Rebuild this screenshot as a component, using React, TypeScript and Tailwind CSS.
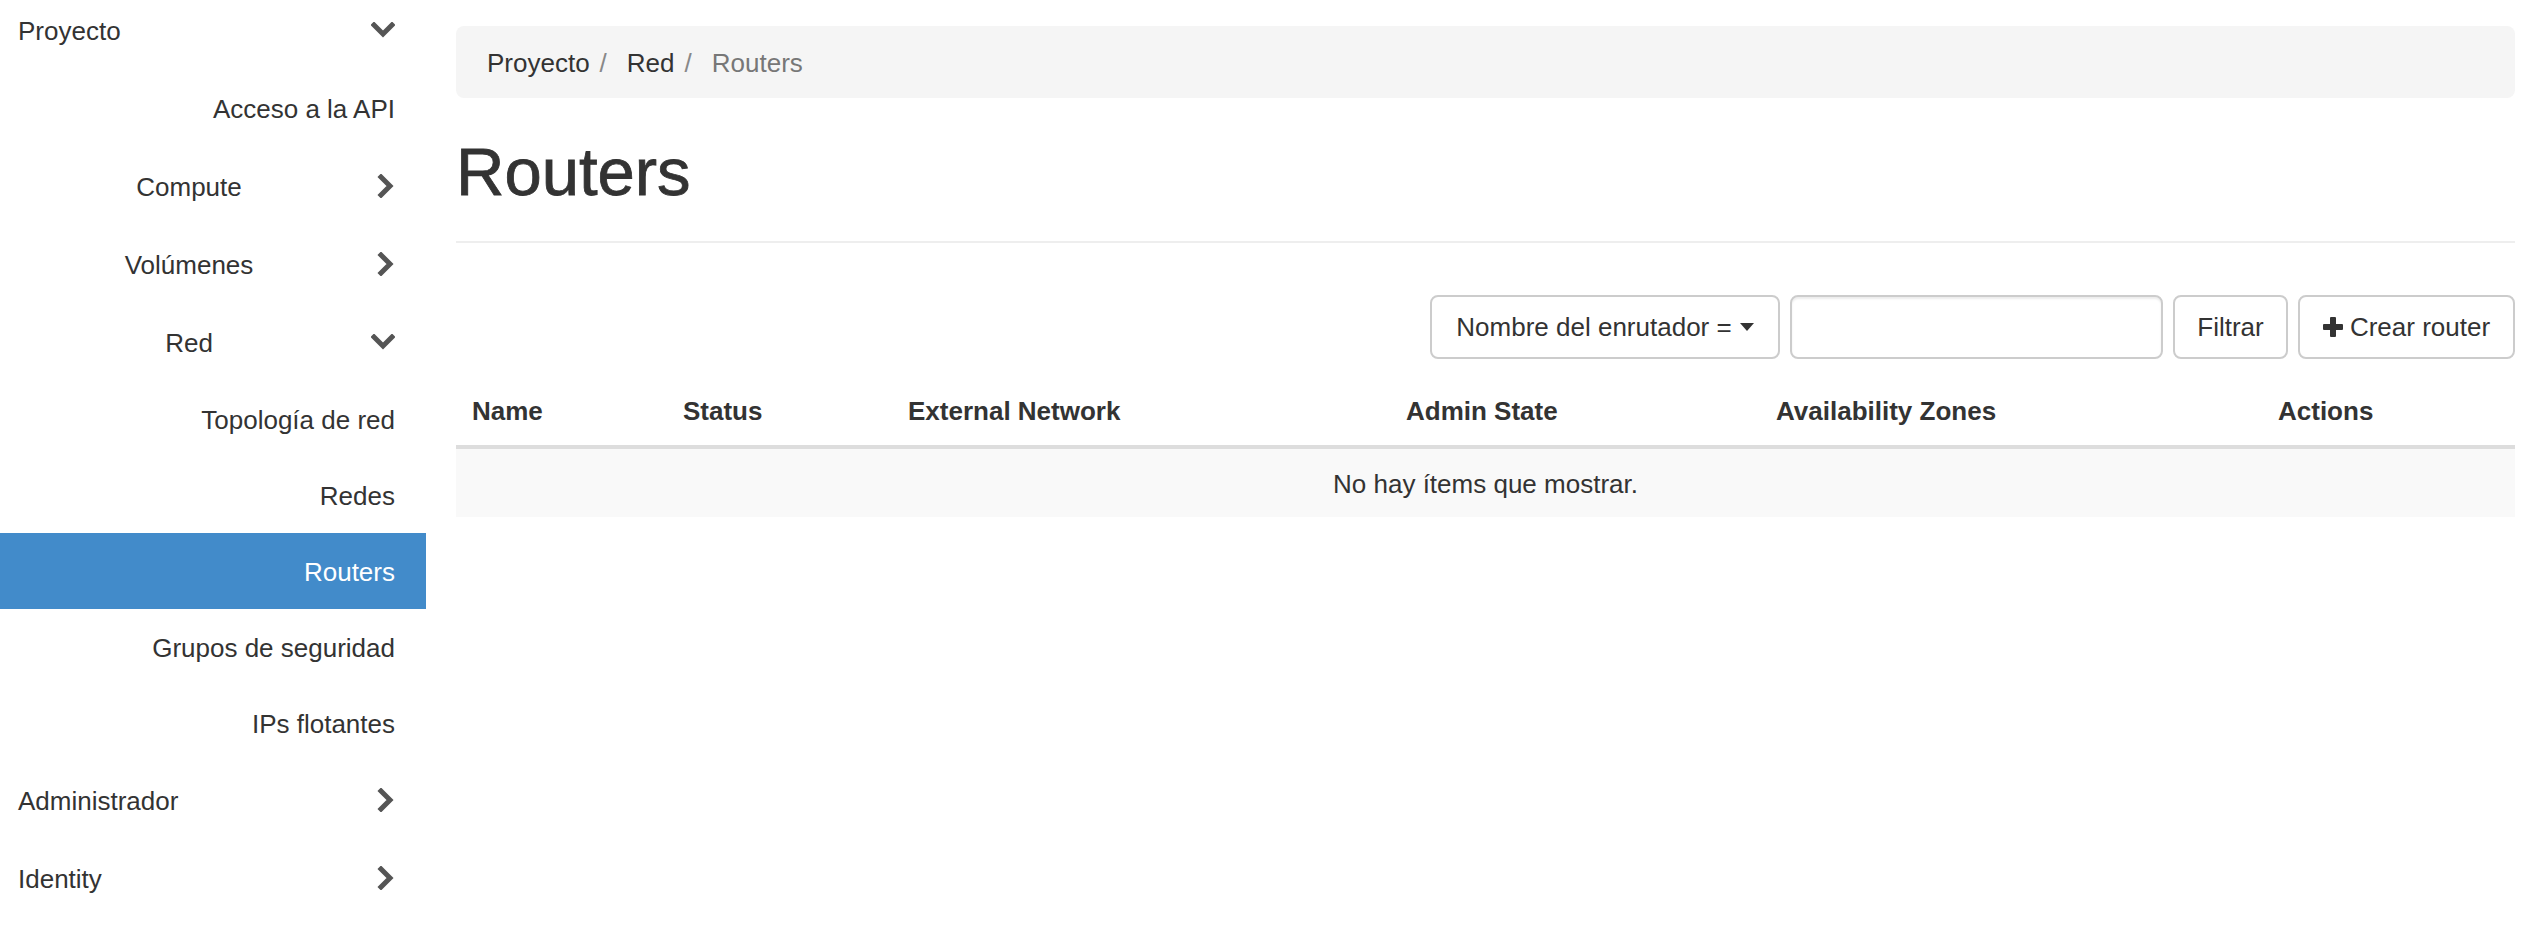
import { Fragment } from "react";

type NavItem = {
  label: string;
  level: 0 | 1 | 2;
  chevron?: "down" | "right";
  tall?: boolean;
  active?: boolean;
};

const navItems: NavItem[] = [
  { label: "Proyecto", level: 0, chevron: "down", tall: true },
  { label: "Acceso a la API", level: 2, tall: true },
  { label: "Compute", level: 1, chevron: "right", tall: true },
  { label: "Volúmenes", level: 1, chevron: "right", tall: true },
  { label: "Red", level: 1, chevron: "down", tall: true },
  { label: "Topología de red", level: 2 },
  { label: "Redes", level: 2 },
  { label: "Routers", level: 2, active: true },
  { label: "Grupos de seguridad", level: 2 },
  { label: "IPs flotantes", level: 2 },
  { label: "Administrador", level: 0, chevron: "right", tall: true },
  { label: "Identity", level: 0, chevron: "right", tall: true },
];

const columns = [
  { title: "Name", width: "w-[211px]" },
  { title: "Status", width: "w-[225px]" },
  { title: "External Network", width: "w-[498px]" },
  { title: "Admin State", width: "w-[370px]" },
  { title: "Availability Zones", width: "w-[502px]" },
  { title: "Actions", width: "w-[253px]" },
];

function Chevron({ dir }: { dir: "down" | "right" }) {
  if (dir === "down") {
    return (
      <svg width="24" height="16" viewBox="0 0 24 16" className="text-[#555]">
        <polyline
          points="3,3 12,12 21,3"
          fill="none"
          stroke="currentColor"
          strokeWidth="5"
          strokeLinecap="square"
        />
      </svg>
    );
  }
  return (
    <svg width="18" height="24" viewBox="0 0 18 24" className="text-[#555]">
      <polyline
        points="4,3 13,12 4,21"
        fill="none"
        stroke="currentColor"
        strokeWidth="5"
        strokeLinecap="square"
      />
    </svg>
  );
}

function Sidebar() {
  return (
    <aside className="w-[426px] shrink-0">
      <ul className="-mt-[9px]">
        {navItems.map((item) => (
          <li
            key={item.label}
            className={`flex items-center pl-[18px] pr-[31px] text-[26px] ${
              item.tall ? "h-[78px]" : "h-[76px]"
            } ${item.active ? "bg-[#428bca] text-white" : "text-[#333]"}`}
          >
            {item.level === 0 && (
              <Fragment>
                <span className="flex-1 pt-[2px]">{item.label}</span>
                <span className="flex w-[35px] justify-end">
                  {item.chevron && <Chevron dir={item.chevron} />}
                </span>
              </Fragment>
            )}
            {item.level === 1 && (
              <Fragment>
                <span className="flex-1 pt-[2px] text-center">{item.label}</span>
                <span className="flex w-[35px] justify-end">
                  {item.chevron && <Chevron dir={item.chevron} />}
                </span>
              </Fragment>
            )}
            {item.level === 2 && (
              <span className="flex-1 pt-[2px] text-right">{item.label}</span>
            )}
          </li>
        ))}
      </ul>
    </aside>
  );
}

function Toolbar() {
  return (
    <div className="mt-[52px] flex justify-end gap-[10px] text-[26px] text-[#333]">
      <button className="flex h-[64px] w-[350px] items-center justify-center gap-[8px] rounded-[8px] border-2 border-[#ccc] bg-white">
        <span>Nombre del enrutador =</span>
        <svg width="14" height="8" viewBox="0 0 14 8">
          <polygon points="0,0 14,0 7,8" fill="#333" />
        </svg>
      </button>
      <input
        type="text"
        className="h-[64px] w-[373px] rounded-[8px] border-2 border-[#ccc] bg-white px-[24px] shadow-[inset_0_2px_2px_rgba(0,0,0,0.075)] outline-none"
      />
      <button className="flex h-[64px] w-[115px] items-center justify-center rounded-[8px] border-2 border-[#ccc] bg-white">
        Filtrar
      </button>
      <button className="flex h-[64px] w-[217px] items-center justify-center gap-[7px] rounded-[8px] border-2 border-[#ccc] bg-white">
        <svg width="20" height="20" viewBox="0 0 20 20">
          <rect x="7" y="0" width="6" height="20" rx="1" fill="#333" />
          <rect x="0" y="7" width="20" height="6" rx="1" fill="#333" />
        </svg>
        <span>Crear router</span>
      </button>
    </div>
  );
}

function RoutersTable() {
  return (
    <table className="mt-[17px] w-full table-fixed border-collapse text-[26px] text-[#333]">
      <thead>
        <tr className="border-b-4 border-[#ddd]">
          {columns.map((col) => (
            <th
              key={col.title}
              className={`${col.width} px-[16px] pt-[17px] pb-[15px] text-left font-bold leading-[37px]`}
            >
              {col.title}
            </th>
          ))}
        </tr>
      </thead>
      <tbody>
        <tr className="bg-[#f9f9f9]">
          <td
            colSpan={columns.length}
            className="px-[16px] pt-[17px] pb-[15px] text-center leading-[36px]"
          >
            No hay ítems que mostrar.
          </td>
        </tr>
      </tbody>
    </table>
  );
}

export default function App() {
  return (
    <div className="flex h-[946px] w-full overflow-hidden bg-white font-['Liberation_Sans',Arial,sans-serif]">
      <Sidebar />
      <main className="flex-1 pl-[30px] pr-[31px]">
        <nav className="mt-[26px] flex h-[72px] items-center rounded-[8px] bg-[#f5f5f5] px-[31px] pt-[3px] text-[26px]">
          <span className="text-[#333]">Proyecto</span>
          <span className="ml-[10px] mr-[20px] text-[#888]">/</span>
          <span className="text-[#333]">Red</span>
          <span className="ml-[10px] mr-[20px] text-[#888]">/</span>
          <span className="text-[#777]">Routers</span>
        </nav>
        <h1 className="mt-[37px] text-[67px] leading-[74px] text-[#333] [-webkit-text-stroke:0.8px_#333]">
          Routers
        </h1>
        <hr className="mt-[32px] border-t-2 border-[#eee]" />
        <Toolbar />
        <RoutersTable />
      </main>
    </div>
  );
}
